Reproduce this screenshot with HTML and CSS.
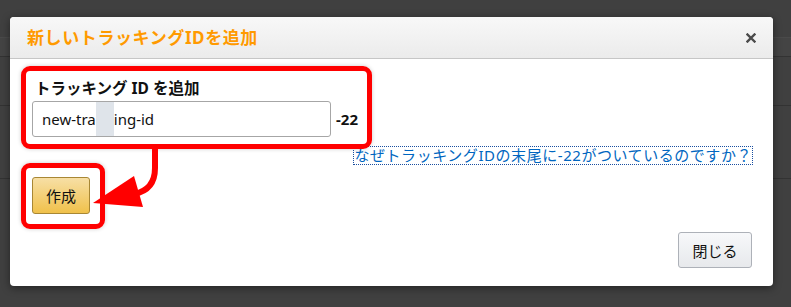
FILE: index.html
```html
<!DOCTYPE html>
<html lang="ja">
<head>
<meta charset="utf-8">
<link rel="stylesheet" href="styles.css">
</head>
<body>
<div class="page">
  <div class="dialog">
    <div class="header">
      <h1 class="title">新しいトラッキングIDを追加</h1>
      <span class="close-x">
        <svg width="10" height="10" viewBox="0 0 10 10"><path d="M1.5 1.5 L8.5 8.5 M8.5 1.5 L1.5 8.5" stroke="#4a4a4a" stroke-width="2.4" stroke-linecap="square"/></svg>
      </span>
    </div>
    <div class="content">
      <div class="field-label">トラッキング ID を追加</div>
      <div class="input-row">
        <div class="input"><span>new-tra</span><span class="blur"></span><span>ing-id</span></div>
        <span class="suffix">-22</span>
      </div>
      <div class="link-row"><a class="help-link">なぜトラッキングIDの末尾に-22がついているのですか？</a></div>
      <div class="create-row"><button class="btn-primary">作成</button></div>
      <div class="footer"><button class="btn-secondary">閉じる</button></div>
    </div>
  </div>
  <div class="mark mark-field"></div>
  <div class="mark mark-button"></div>
  <svg class="arrow" width="791" height="307" viewBox="0 0 791 307">
    <path d="M155 146 L155 168 Q155 190 134 194" fill="none" stroke="#ff0000" stroke-width="6"/>
    <polygon points="93,203 134,176 143,207" fill="#ff0000"/>
  </svg>
</div>
</body>
</html>
```
FILE: styles.css
```css
html, body {
  margin: 0;
  padding: 0;
}
body {
  width: 791px;
  height: 307px;
  overflow: hidden;
  background-color: #404040;
  background-image:
    linear-gradient(to bottom,
      transparent 0, transparent 37px, #4a4a4a 37px, #4a4a4a 38px,
      #444 38px, #444 56px, #333 56px, #333 57px,
      transparent 57px, transparent 105px, #333 105px, #333 106px,
      transparent 106px, transparent 178px, #333 178px, #333 179px,
      transparent 179px);
  font-family: "Noto Sans", "Noto Sans CJK JP", sans-serif;
}
.page {
  position: relative;
  width: 791px;
  height: 307px;
  padding: 17px 0 0 10px;
  box-sizing: border-box;
}
.dialog {
  width: 763px;
  height: 269px;
  background: #fff;
  border-radius: 4px;
  box-shadow: 0 2px 8px rgba(0,0,0,0.45);
  display: flex;
  flex-direction: column;
}
.header {
  height: 42px;
  box-sizing: border-box;
  border-bottom: 1px solid #c6c6c6;
  border-radius: 4px 4px 0 0;
  background: linear-gradient(#f8f8f8, #ebebeb);
  display: flex;
  align-items: center;
  justify-content: space-between;
  padding: 0 17px 0 17px;
}
.title {
  margin: 0;
  font-size: 17px;
  font-weight: 700;
  color: #ff9a00;
  letter-spacing: 0.6px;
  line-height: 22px;
}
.close-x {
  display: flex;
  width: 10px;
  height: 10px;
}
.content {
  flex: 1;
  display: flex;
  flex-direction: column;
  padding: 19px 21px 18px 22px;
}
.field-label {
  font-size: 15.5px;
  font-weight: 700;
  color: #111;
  line-height: 20px;
  padding-left: 3px;
}
.input-row {
  display: flex;
  align-items: center;
  margin-top: 3px;
}
.input {
  width: 299px;
  height: 36px;
  box-sizing: border-box;
  border: 1px solid #a6a6a6;
  border-radius: 3px;
  display: flex;
  align-items: center;
  padding-left: 9px;
  font-size: 15px;
  color: #111;
}
.blur {
  display: inline-block;
  width: 18px;
  height: 34px;
  background: #dfe4ea;
}
.suffix {
  margin-left: 5px;
  font-size: 15px;
  font-weight: 700;
  color: #111;
}
.link-row {
  display: flex;
  justify-content: flex-end;
  margin-top: 10px;
}
.help-link {
  font-size: 15px;
  line-height: 17px;
  color: #0066c0;
  outline: 1px dotted #1a4fa0;
  letter-spacing: 0.55px;
}
.create-row {
  display: flex;
  margin-top: 13px;
}
.btn-primary {
  width: 58px;
  height: 37px;
  border: 1px solid #a88734;
  border-radius: 3px;
  background: linear-gradient(#f7dfa5, #f0c14b);
  font-family: inherit;
  font-size: 15px;
  color: #111;
  padding: 0;
}
.footer {
  margin-top: auto;
  display: flex;
  justify-content: flex-end;
}
.btn-secondary {
  width: 74px;
  height: 36px;
  border: 1px solid #adb1b8;
  border-radius: 3px;
  background: linear-gradient(#f7f8fa, #e7e9ec);
  font-family: inherit;
  font-size: 15px;
  color: #111;
  padding: 0;
}
.mark {
  position: absolute;
  border: 5px solid #ff0000;
  border-radius: 9px;
  box-sizing: border-box;
  box-shadow: 0 0 4px rgba(0,0,0,0.2);
}
.mark-field {
  left: 21px;
  top: 66px;
  width: 351px;
  height: 83px;
}
.mark-button {
  left: 21px;
  top: 163px;
  width: 84px;
  height: 66px;
}
.arrow {
  position: absolute;
  left: 0;
  top: 0;
  pointer-events: none;
}
```
